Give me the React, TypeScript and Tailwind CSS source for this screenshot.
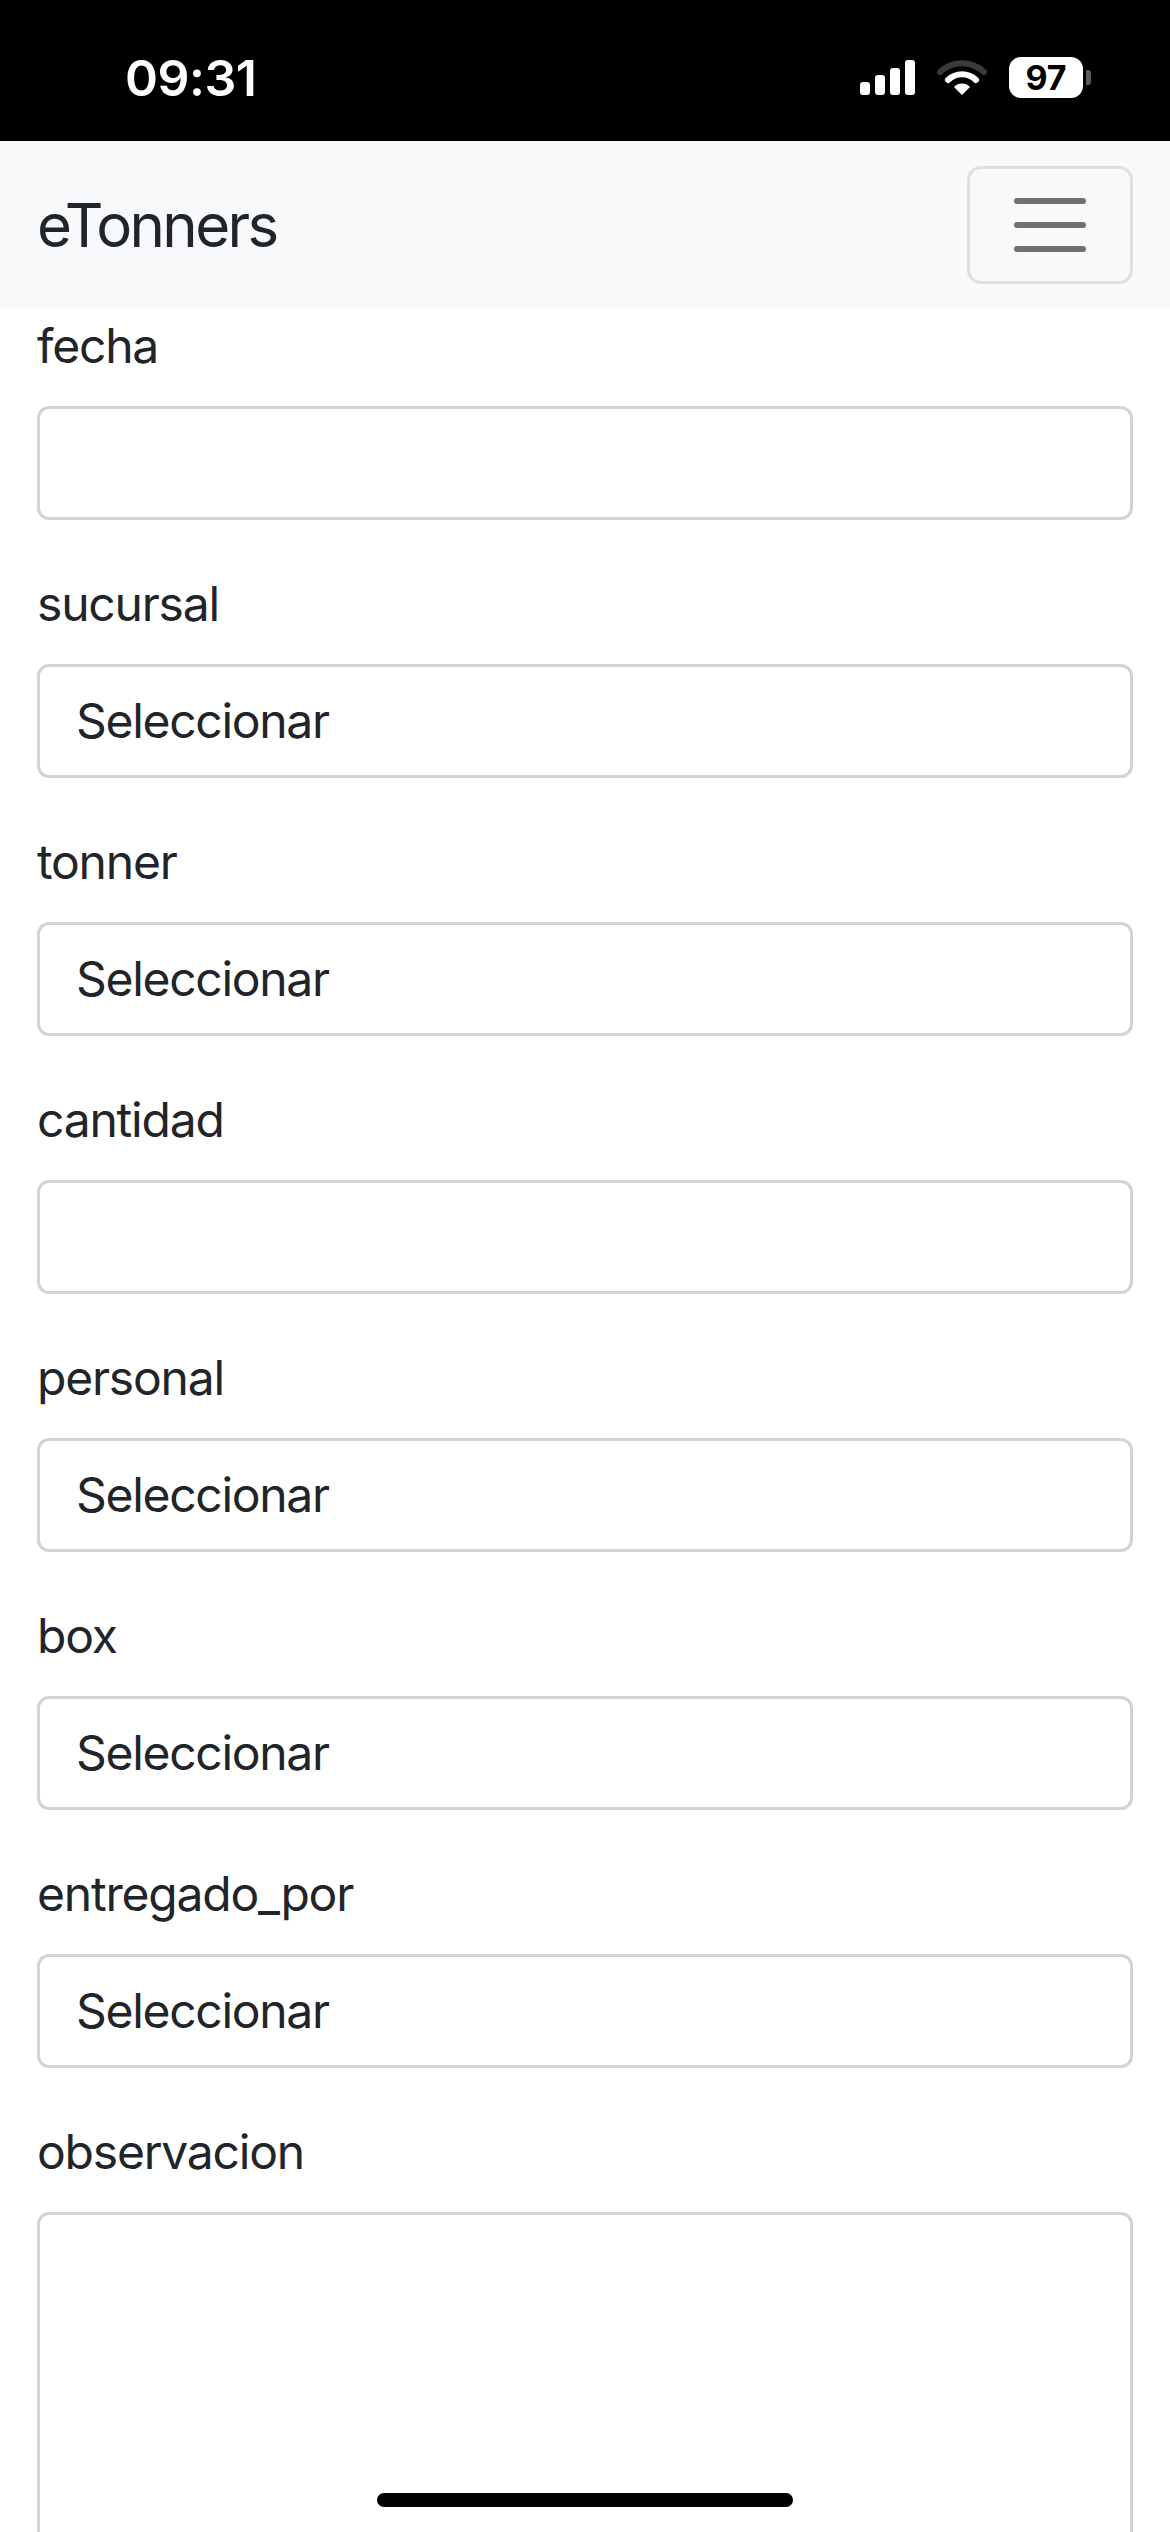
import React from "react";

const fields: { label: string; kind: "input" | "select" | "textarea" }[] = [
  { label: "fecha", kind: "input" },
  { label: "sucursal", kind: "select" },
  { label: "tonner", kind: "select" },
  { label: "cantidad", kind: "input" },
  { label: "personal", kind: "select" },
  { label: "box", kind: "select" },
  { label: "entregado_por", kind: "select" },
  { label: "observacion", kind: "textarea" },
];

function StatusBar() {
  return (
    <div className="flex h-[141px] items-center justify-between bg-black pt-[14px] pl-[125px] pr-[79px] text-white">
      <span className="text-[50px] font-semibold leading-none tracking-[-0.5px]">09:31</span>
      <div className="flex items-center gap-[22px]">
        {/* signal */}
        <div className="flex items-end gap-[5px] pb-[1px]">
          <div className="h-[13px] w-[10px] rounded-[3px] bg-white" />
          <div className="h-[20px] w-[10px] rounded-[3px] bg-white" />
          <div className="h-[27px] w-[10px] rounded-[3px] bg-white" />
          <div className="h-[35px] w-[10px] rounded-[3px] bg-white" />
        </div>
        {/* wifi */}
        <svg width="50" height="36" viewBox="0 0 50 36">
          <path d="M3 12 A32 32 0 0 1 47 12" fill="none" stroke="#3a3a3a" strokeWidth="6" strokeLinecap="round" />
          <path d="M11 20 A20 20 0 0 1 39 20" fill="none" stroke="#fff" strokeWidth="6" strokeLinecap="round" />
          <path d="M17 27 L25 35 L33 27 A11 11 0 0 0 17 27 Z" fill="#fff" />
        </svg>
        {/* battery */}
        <div className="flex items-center gap-[3px]">
          <div className="flex h-[41px] w-[74px] items-center justify-center rounded-[12px] bg-white">
            <span className="text-[34px] font-bold leading-none text-black">97</span>
          </div>
          <div className="h-[15px] w-[5px] rounded-r-[3px] bg-[#5a5a5a]" />
        </div>
      </div>
    </div>
  );
}

function NavBar() {
  return (
    <nav className="flex h-[167px] items-center justify-between bg-[#f8f9fa] px-[37px]">
      <span className="text-[60px] leading-none tracking-[-2.6px] text-[#212529]">eTonners</span>
      <button className="flex h-[118px] w-[166px] flex-col items-center justify-center gap-[18px] rounded-[14px] border-[3px] border-[#dfe0e1]">
        <span className="h-[6px] w-[72px] rounded-full bg-[#707070]" />
        <span className="h-[6px] w-[72px] rounded-full bg-[#707070]" />
        <span className="h-[6px] w-[72px] rounded-full bg-[#707070]" />
      </button>
    </nav>
  );
}

export default function App() {
  return (
    <div
      className="relative h-[2532px] w-[1170px] overflow-hidden bg-white"
      style={{ fontFamily: "Inter, 'Noto Sans', sans-serif" }}
    >
      <StatusBar />
      <NavBar />
      <form className="flex flex-col px-[37px] pt-[2px]">
        {fields.map((f) => (
          <div key={f.label} className="mb-[48px] flex flex-col">
            <label className="mb-[24px] text-[48px] leading-[72px] tracking-[-1.2px] text-[#212529]">{f.label}</label>
            {f.kind === "input" && (
              <input className="h-[114px] w-full rounded-[12px] border-[3px] border-[#ced4da] bg-white px-[36px] text-[48px] text-[#212529] outline-none" />
            )}
            {f.kind === "select" && (
              <div className="flex h-[114px] w-full items-center rounded-[12px] border-[3px] border-[#ced4da] bg-white px-[36px] text-[48px] tracking-[-1.3px] text-[#212529]">
                Seleccionar
              </div>
            )}
            {f.kind === "textarea" && (
              <textarea className="h-[420px] w-full resize-none rounded-[12px] border-[3px] border-[#ced4da] bg-white px-[36px] py-[18px] text-[48px] text-[#212529] outline-none" />
            )}
          </div>
        ))}
      </form>
      <div className="absolute bottom-[25px] left-[377px] h-[14px] w-[416px] rounded-full bg-black" />
    </div>
  );
}
